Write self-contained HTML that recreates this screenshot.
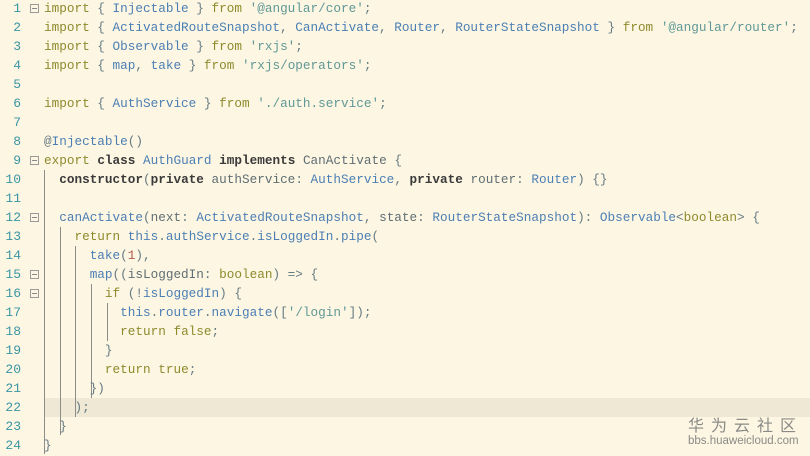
<!DOCTYPE html>
<html><head><meta charset="utf-8"><style>
html,body{margin:0;padding:0}
body{width:810px;height:456px;background:#fdf6e3;position:relative;overflow:hidden;font-family:"Liberation Mono",monospace;font-size:12.7px;color:#657b83}
.l{position:absolute;left:44px;height:19px;line-height:19px;white-space:pre}
.n{position:absolute;left:0;width:21px;text-align:right;height:19px;line-height:19px;color:#3a95a3;font-size:13px}
.f{position:absolute;left:30px;width:7px;height:7px;border:1px solid #9a9a9a;box-sizing:content-box}
.f:after{content:"";position:absolute;left:1px;top:3px;width:5px;height:1px;background:#888}
.g{position:absolute;width:1px;background:#8c8c8c}
.k{color:#8e8a2c}.b{color:#4b7fb4}.s{color:#5f9896}.d{color:#3a3a3a;font-weight:bold}.v{color:#5f6e73}.r{color:#b2574f}
</style></head><body>
<div style="position:absolute;left:44px;right:0;top:398px;height:19px;background:#eee8d5"></div>
<div class="g" style="left:44px;top:170px;height:284px"></div>
<div class="g" style="left:60px;top:227px;height:208px"></div>
<div class="g" style="left:75px;top:246px;height:171px"></div>
<div class="g" style="left:91px;top:284px;height:114px"></div>
<div class="g" style="left:107px;top:303px;height:38px"></div>

<div class="n" style="top:-1px">1</div><div class="n" style="top:18px">2</div><div class="n" style="top:37px">3</div><div class="n" style="top:56px">4</div><div class="n" style="top:75px">5</div><div class="n" style="top:94px">6</div><div class="n" style="top:113px">7</div><div class="n" style="top:132px">8</div><div class="n" style="top:151px">9</div><div class="n" style="top:170px">10</div><div class="n" style="top:189px">11</div><div class="n" style="top:208px">12</div><div class="n" style="top:227px">13</div><div class="n" style="top:246px">14</div><div class="n" style="top:265px">15</div><div class="n" style="top:284px">16</div><div class="n" style="top:303px">17</div><div class="n" style="top:322px">18</div><div class="n" style="top:341px">19</div><div class="n" style="top:360px">20</div><div class="n" style="top:379px">21</div><div class="n" style="top:398px">22</div><div class="n" style="top:417px">23</div><div class="n" style="top:436px">24</div>

<div class="f" style="top:4px"></div><div class="f" style="top:156px"></div><div class="f" style="top:213px"></div><div class="f" style="top:270px"></div><div class="f" style="top:289px"></div>

<div class="l" style="top:-1px"><span class="k">import</span> { <span class="b">Injectable</span> } <span class="k">from</span> <span class="s">'@angular/core'</span>;</div>
<div class="l" style="top:18px"><span class="k">import</span> { <span class="b">ActivatedRouteSnapshot</span>, <span class="b">CanActivate</span>, <span class="b">Router</span>, <span class="b">RouterStateSnapshot</span> } <span class="k">from</span> <span class="s">'@angular/router'</span>;</div>
<div class="l" style="top:37px"><span class="k">import</span> { <span class="b">Observable</span> } <span class="k">from</span> <span class="s">'rxjs'</span>;</div>
<div class="l" style="top:56px"><span class="k">import</span> { <span class="b">map</span>, <span class="b">take</span> } <span class="k">from</span> <span class="s">'rxjs/operators'</span>;</div>
<div class="l" style="top:94px"><span class="k">import</span> { <span class="b">AuthService</span> } <span class="k">from</span> <span class="s">'./auth.service'</span>;</div>
<div class="l" style="top:132px">@<span class="b">Injectable</span>()</div>
<div class="l" style="top:151px"><span class="k">export</span> <span class="d">class</span> <span class="b">AuthGuard</span> <span class="d">implements</span> <span class="v">CanActivate</span> {</div>
<div class="l" style="top:170px">  <span class="d">constructor</span>(<span class="d">private</span> <span class="v">authService</span>: <span class="b">AuthService</span>, <span class="d">private</span> <span class="v">router</span>: <span class="b">Router</span>) {}</div>
<div class="l" style="top:208px">  <span class="b">canActivate</span>(<span class="v">next</span>: <span class="b">ActivatedRouteSnapshot</span>, <span class="v">state</span>: <span class="b">RouterStateSnapshot</span>): <span class="b">Observable</span>&lt;<span class="k">boolean</span>&gt; {</div>
<div class="l" style="top:227px">    <span class="k">return</span> <span class="b">this</span>.<span class="b">authService</span>.<span class="b">isLoggedIn</span>.<span class="b">pipe</span>(</div>
<div class="l" style="top:246px">      <span class="b">take</span>(<span class="r">1</span>),</div>
<div class="l" style="top:265px">      <span class="b">map</span>((<span class="v">isLoggedIn</span>: <span class="k">boolean</span>) =&gt; {</div>
<div class="l" style="top:284px">        <span class="k">if</span> (!<span class="b">isLoggedIn</span>) {</div>
<div class="l" style="top:303px">          <span class="b">this</span>.<span class="b">router</span>.<span class="b">navigate</span>([<span class="s">'/login'</span>]);</div>
<div class="l" style="top:322px">          <span class="k">return</span> <span class="k">false</span>;</div>
<div class="l" style="top:341px">        }</div>
<div class="l" style="top:360px">        <span class="k">return</span> <span class="k">true</span>;</div>
<div class="l" style="top:379px">      })</div>
<div class="l" style="top:398px">    );</div>
<div class="l" style="top:417px">  }</div>
<div class="l" style="top:436px">}</div>

<div style="position:absolute;left:688px;top:414px;font-family:'Noto Sans CJK SC',sans-serif;font-size:16px;color:#8a8a86;letter-spacing:7px;line-height:20px">华为云社区</div>
<div style="position:absolute;left:688px;top:434px;font-family:'Liberation Sans',sans-serif;font-size:11.5px;color:#8a8a86;line-height:14px">bbs.huaweicloud.com</div>
</body></html>
